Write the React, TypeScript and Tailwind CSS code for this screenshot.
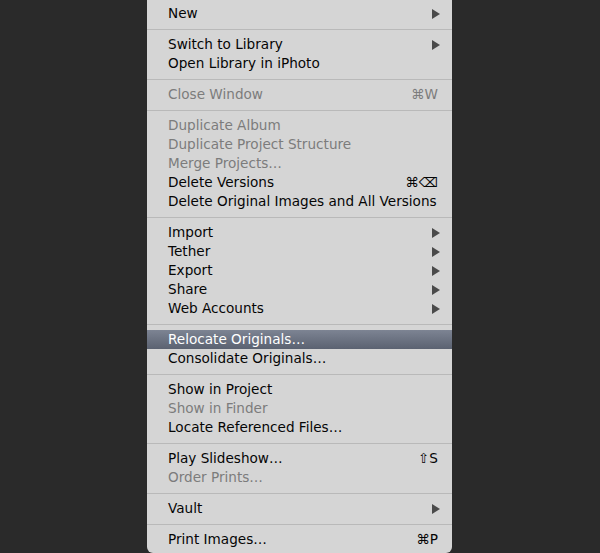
import React from "react";

type Item =
  | { sep: true }
  | { sep?: false; label: string; disabled?: boolean; arrow?: boolean; sc?: React.ReactNode; hl?: boolean };

const items: Item[] = [
  { label: "New", arrow: true },
  { sep: true },
  { label: "Switch to Library", arrow: true },
  { label: "Open Library in iPhoto" },
  { sep: true },
  { label: "Close Window", disabled: true, sc: "⌘W" },
  { sep: true },
  { label: "Duplicate Album", disabled: true },
  { label: "Duplicate Project Structure", disabled: true },
  { label: "Merge Projects…", disabled: true },
  { label: "Delete Versions", sc: "⌘⌫" },
  { label: "Delete Original Images and All Versions" },
  { sep: true },
  { label: "Import", arrow: true },
  { label: "Tether", arrow: true },
  { label: "Export", arrow: true },
  { label: "Share", arrow: true },
  { label: "Web Accounts", arrow: true },
  { sep: true },
  { label: "Relocate Originals…", hl: true },
  { label: "Consolidate Originals…" },
  { sep: true },
  { label: "Show in Project" },
  { label: "Show in Finder", disabled: true },
  { label: "Locate Referenced Files…" },
  { sep: true },
  { label: "Play Slideshow…", sc: "⇧S" },
  { label: "Order Prints…", disabled: true },
  { sep: true },
  { label: "Vault", arrow: true },
  { sep: true },
  { label: "Print Images…", sc: "⌘P" },
];

function Arrow({ white }: { white?: boolean }) {
  return (
    <svg width="8" height="10" viewBox="0 0 8 10" className="block">
      <path d="M0 0 L8 5 L0 10 Z" fill={white ? "#ffffff" : "#4a4a4a"} />
    </svg>
  );
}

export default function App() {
  return (
    <div className="w-[600px] h-[553px] bg-[#2a2a2a] overflow-hidden">
      <div
        className="ml-[147px] w-[305px] h-[553px] bg-[#d5d5d5] rounded-b-[6px] pt-[4px] text-[13.6px] leading-[19px]"
        style={{ fontFamily: '"DejaVu Sans", "Lucida Grande", sans-serif' }}
      >
        {items.map((it, i) =>
          it.sep ? (
            <div key={i} className="h-[12px] flex flex-col justify-center">
              <div className="h-px bg-[#b9b9b9]" />
            </div>
          ) : (
            <div
              key={i}
              className={
                "h-[19px] flex items-center pl-[21px] pr-[12px] " +
                (it.hl
                  ? "bg-gradient-to-b from-[#7d8493] to-[#5b6271] text-white"
                  : it.disabled
                  ? "text-[#7c7c7c]"
                  : "text-[#050505]")
              }
            >
              <span className="flex-1 whitespace-nowrap">{it.label}</span>
              {it.sc ? <span className="whitespace-nowrap pr-[2px]">{it.sc}</span> : null}
              {it.arrow ? <Arrow white={it.hl} /> : null}
            </div>
          )
        )}
      </div>
    </div>
  );
}
